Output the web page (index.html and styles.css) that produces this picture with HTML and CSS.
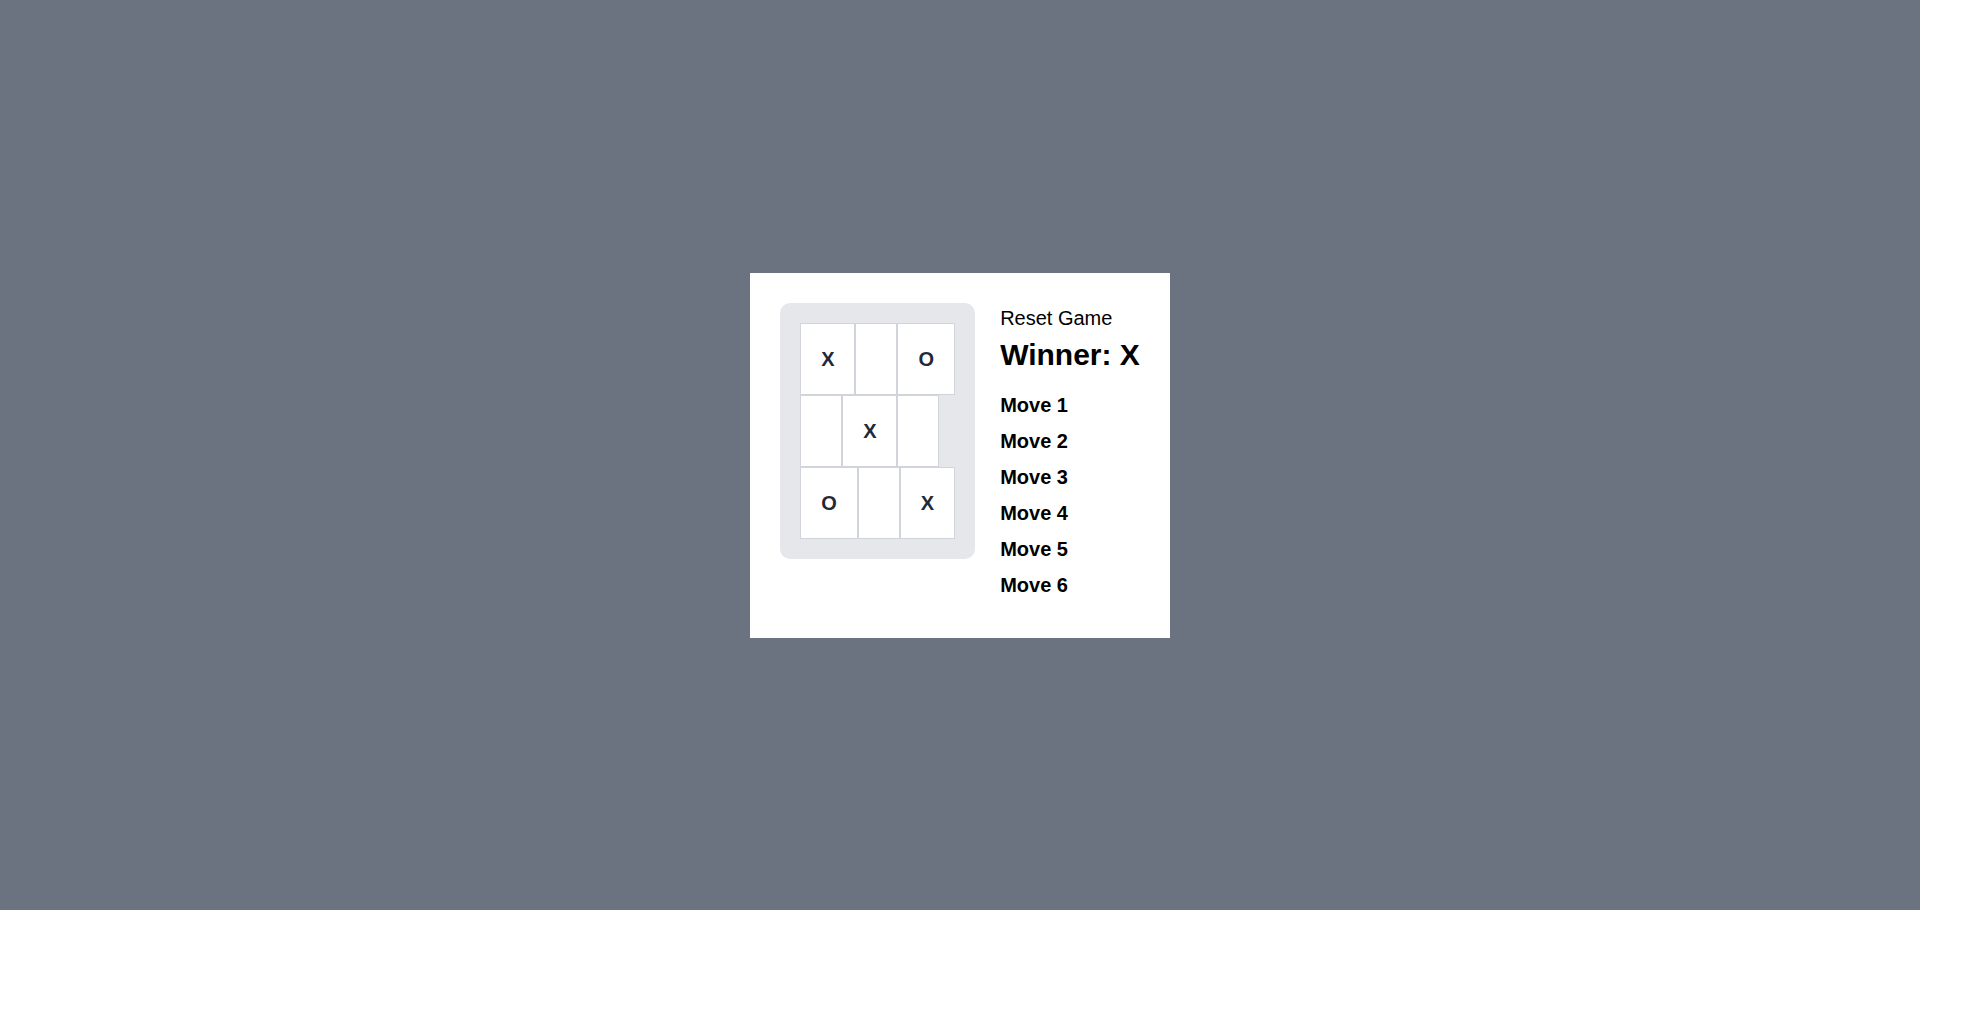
FILE: index.html
```html
<!DOCTYPE html>
<html lang="en">
<head>
<meta charset="utf-8">
<title>Tic Tac Toe</title>
<link rel="stylesheet" href="styles.css">
</head>
<body>
<div class="screen">
  <div class="card">
    <div class="board">
      <div class="row">
        <button class="cell">X</button>
        <button class="cell"></button>
        <button class="cell">O</button>
      </div>
      <div class="row">
        <button class="cell"></button>
        <button class="cell">X</button>
        <button class="cell"></button>
      </div>
      <div class="row">
        <button class="cell">O</button>
        <button class="cell"></button>
        <button class="cell">X</button>
      </div>
    </div>
    <div class="side">
      <button class="reset">Reset Game</button>
      <h2 class="winner">Winner: X</h2>
      <ul class="moves">
        <li><button class="move">Move 1</button></li>
        <li><button class="move">Move 2</button></li>
        <li><button class="move">Move 3</button></li>
        <li><button class="move">Move 4</button></li>
        <li><button class="move">Move 5</button></li>
        <li><button class="move">Move 6</button></li>
      </ul>
    </div>
  </div>
</div>
</body>
</html>
```
FILE: styles.css
```css
html, body {
  margin: 0;
  padding: 0;
  background: #ffffff;
  font-family: "Liberation Sans", Arial, sans-serif;
}

.screen {
  width: 1920px;
  height: 910px;
  background: #6b7280;
  display: flex;
  align-items: center;
  justify-content: center;
}

.card {
  background: #ffffff;
  padding: 30px;
  display: flex;
  align-items: flex-start;
  gap: 25px;
}

.board {
  background: #e5e7eb;
  border-radius: 10px;
  padding: 20px;
  width: 155px;
}

.row {
  display: flex;
}

.cell {
  box-sizing: border-box;
  height: 72px;
  min-width: 42px;
  padding: 0 20px;
  margin: 0;
  border: 1px solid #d1d5db;
  background: #ffffff;
  color: #1f2937;
  font-family: "Liberation Sans", Arial, sans-serif;
  font-weight: 700;
  font-size: 20px;
  line-height: 28px;
  display: flex;
  align-items: center;
  justify-content: center;
  flex: none;
}

.side {
  display: flex;
  flex-direction: column;
  align-items: flex-start;
  padding-top: 1px;
}

.reset {
  background: none;
  border: none;
  padding: 0;
  margin: 0;
  font-family: "Liberation Sans", Arial, sans-serif;
  font-size: 20px;
  line-height: 28px;
  color: #000000;
}

.winner {
  margin: 5px 0 18px;
  font-size: 30px;
  line-height: 36px;
  font-weight: 700;
  color: #000000;
}

.moves {
  list-style: none;
  margin: 0;
  padding: 0;
}

.moves li {
  margin: 0 0 8px;
}

.moves li:last-child {
  margin-bottom: 9px;
}

.move {
  background: none;
  border: none;
  padding: 0;
  margin: 0;
  font-family: "Liberation Sans", Arial, sans-serif;
  font-size: 20px;
  line-height: 28px;
  font-weight: 700;
  color: #000000;
}
```
